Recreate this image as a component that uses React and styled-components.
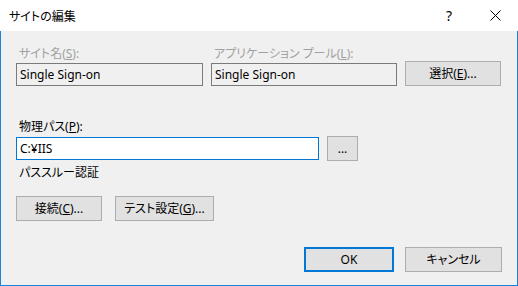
import React from "react";
import styled, { createGlobalStyle } from "styled-components";

const GlobalStyle = createGlobalStyle`
  html, body {
    margin: 0;
    padding: 0;
    background: #ffffff;
  }
  body {
    font-family: "Segoe UI", "Noto Sans", "Noto Sans CJK JP", sans-serif;
    font-size: 12px;
    color: #000;
    font-feature-settings: "palt";
  }
`;

const Window = styled.div`
  width: 518px;
  height: 286px;
  display: flex;
  flex-direction: column;
  box-sizing: border-box;
`;

const TitleBar = styled.div`
  height: 31px;
  display: flex;
  align-items: center;
  background: #ffffff;
  padding-left: 9px;
  flex-shrink: 0;
`;

const Title = styled.span`
  flex: 1;
  font-size: 12px;
  line-height: 15px;
  margin-top: 1px;
`;

const TitleButton = styled.div`
  width: 46px;
  height: 31px;
  display: flex;
  align-items: center;
  justify-content: center;
  font-size: 14px;
  color: #000;
`;

const Body = styled.div`
  flex: 1;
  background: #f0f0f0;
  border: 1px solid #1883d7;
  border-top: none;
  padding: 15px 0 0 15px;
  display: flex;
  flex-direction: column;
`;

const TopRow = styled.div`
  display: flex;
  align-items: flex-end;
  gap: 8px;
`;

const Field = styled.div`
  display: flex;
  flex-direction: column;
  width: ${(p) => p.$w}px;
`;

const Label = styled.div`
  line-height: 15px;
  height: 15px;
  padding-left: 3px;
  margin-bottom: 2px;
  color: ${(p) => (p.$disabled ? "#a0a0a0" : "#000")};
  white-space: nowrap;
`;

const TextBox = styled.div`
  height: 23px;
  box-sizing: border-box;
  border: 1px solid ${(p) => (p.$focus ? "#0078d7" : "#7a7a7a")};
  background: ${(p) => (p.$readonly ? "#f0f0f0" : "#ffffff")};
  display: flex;
  align-items: center;
  padding-left: 3px;
  line-height: 15px;
  white-space: nowrap;
`;

const Button = styled.div`
  width: ${(p) => p.$w}px;
  height: 25px;
  box-sizing: border-box;
  border: ${(p) => (p.$default ? "2px solid #0078d7" : "1px solid #adadad")};
  background: #e1e1e1;
  display: flex;
  align-items: center;
  justify-content: center;
  line-height: 15px;
  white-space: nowrap;
  flex-shrink: 0;
`;

const PathRow = styled.div`
  display: flex;
  align-items: center;
  gap: 8px;
`;

const Section = styled.div`
  margin-top: ${(p) => p.$mt}px;
  display: flex;
  flex-direction: column;
`;

const Note = styled.div`
  line-height: 15px;
  padding-left: 3px;
  margin-top: 4px;
`;

const ButtonRow = styled.div`
  display: flex;
  gap: ${(p) => p.$gap}px;
  margin-top: ${(p) => p.$mt}px;
  justify-content: ${(p) => (p.$end ? "flex-end" : "flex-start")};
  padding-right: ${(p) => p.$pr || 0}px;
`;

const CloseIcon = () => (
  <svg width="11" height="11" viewBox="0 0 11 11">
    <path d="M0.5 0.5 L10.5 10.5 M10.5 0.5 L0.5 10.5" stroke="#000" strokeWidth="1" />
  </svg>
);

export default function App() {
  return (
    <>
      <GlobalStyle />
      <Window>
        <TitleBar>
          <Title>サイトの編集</Title>
          <TitleButton>?</TitleButton>
          <TitleButton>
            <CloseIcon />
          </TitleButton>
        </TitleBar>
        <Body>
          <TopRow>
            <Field $w={187}>
              <Label $disabled>
                サイト名(<u>S</u>):
              </Label>
              <TextBox $readonly>Single Sign-on</TextBox>
            </Field>
            <Field $w={186}>
              <Label $disabled>
                アプリケーション プール(<u>L</u>):
              </Label>
              <TextBox $readonly>Single Sign-on</TextBox>
            </Field>
            <Button $w={96}>
              選択(<u>E</u>)...
            </Button>
          </TopRow>

          <Section $mt={33}>
            <Label>
              物理パス(<u>P</u>):
            </Label>
            <PathRow>
              <Field $w={303}>
                <TextBox $focus>C:¥IIS</TextBox>
              </Field>
              <Button $w={31}>...</Button>
            </PathRow>
            <Note>パススルー認証</Note>
          </Section>

          <ButtonRow $gap={13} $mt={16}>
            <Button $w={86}>
              接続(<u>C</u>)...
            </Button>
            <Button $w={99}>
              テスト設定(<u>G</u>)...
            </Button>
          </ButtonRow>

          <ButtonRow $gap={11} $mt={26} $end $pr={15}>
            <Button $w={90} $default>
              OK
            </Button>
            <Button $w={97}>キャンセル</Button>
          </ButtonRow>
        </Body>
      </Window>
    </>
  );
}
